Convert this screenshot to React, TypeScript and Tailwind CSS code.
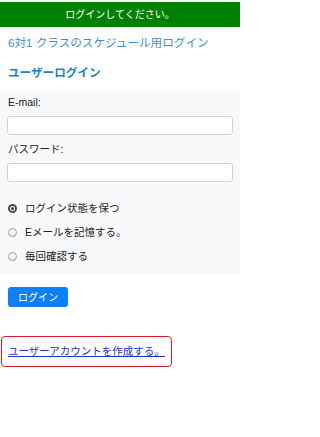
import React from "react";

const FONT = { fontFamily: '"Liberation Sans", "Noto Sans CJK JP", sans-serif' };

const OPTIONS = [
  { label: "ログイン状態を保つ", checked: true },
  { label: "Eメールを記憶する。", checked: false },
  { label: "毎回確認する", checked: false },
];

function Radio({ checked }: { checked: boolean }) {
  if (checked) {
    return (
      <span className="flex h-[9px] w-[9px] items-center justify-center rounded-full bg-[#4a4a4a]">
        <span className="flex h-[5px] w-[5px] items-center justify-center rounded-full bg-white">
          <span className="h-[3px] w-[3px] rounded-full bg-[#3a3a3a]" />
        </span>
      </span>
    );
  }
  return <span className="h-[9px] w-[9px] rounded-full border border-[#9a9a9a] bg-gradient-to-b from-white to-[#ececec]" />;
}

export default function App() {
  return (
    <div className="w-[240px] bg-white text-[#222]" style={FONT}>
      <div className="mt-[2px] flex h-[25px] items-center justify-center bg-[#008000] text-[10px] text-white">
        ログインしてください。
      </div>

      <h1 className="mt-[9px] px-2 text-[11.6px] leading-[14px] text-[#3a8fd2]">
        6対1 クラスのスケジュール用ログイン
      </h1>

      <h2 className="mt-[16px] px-2 text-[11.6px] font-bold leading-[14px] text-[#1b80c9]">
        ユーザーログイン
      </h2>

      <form className="mt-[9px] bg-[#f8f9fa] px-[7px] pb-[11px] pt-[7px]">
        <label className="block pl-px text-[10.5px] leading-[13px]">E-mail:</label>
        <input
          type="text"
          className="mt-[7px] block h-[19px] w-[226px] rounded-[3px] border border-[#cfd2d6] bg-white"
        />
        <label className="mt-[8px] block pl-px text-[10.5px] leading-[13px]">パスワード:</label>
        <input
          type="password"
          className="mt-[7px] block h-[19px] w-[226px] rounded-[3px] border border-[#cfd2d6] bg-white"
        />
        <div className="mt-[20px] flex flex-col gap-[11px]">
          {OPTIONS.map((o) => (
            <div key={o.label} className="flex h-[13px] items-center gap-[8px] pl-[1px] text-[10.5px]">
              <Radio checked={o.checked} />
              <span>{o.label}</span>
            </div>
          ))}
        </div>
      </form>

      <div className="px-2 pt-[13px]">
        <button className="flex h-[20px] w-[60px] items-center justify-center rounded-[3px] bg-[#0d7ff9] text-[10px] text-white">
          ログイン
        </button>
      </div>

      <div className="ml-[1px] mt-[29px] flex h-[31px] w-[171px] items-center rounded-[4px] border-[1.5px] border-[#d4202c] px-[6px]">
        <a href="#" className="text-[10.5px] text-[#2433c8] underline">
          ユーザーアカウントを作成する。
        </a>
      </div>
    </div>
  );
}
